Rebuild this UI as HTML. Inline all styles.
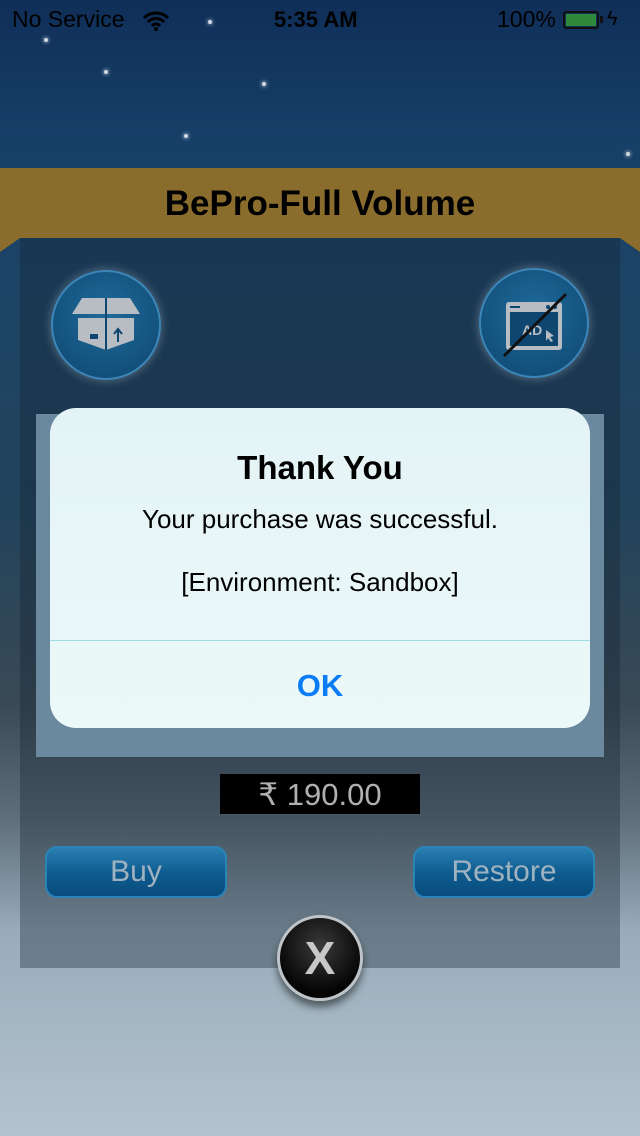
<!DOCTYPE html>
<html><head><meta charset="utf-8"><style>
*{margin:0;padding:0;box-sizing:border-box}
body{width:640px;height:1136px;overflow:hidden;position:relative;font-family:"Liberation Sans",sans-serif;
background:linear-gradient(180deg,#0f2e58 0%,#163f68 12%,#1d4466 25%,#22435c 45%,#3a4a55 62%,#5e6e7a 72%,#98acba 82%,#b4c4ce 100%)}
.abs{position:absolute}
.star{position:absolute;width:4px;height:4px;border-radius:50%;background:#cfd8e0;box-shadow:0 0 4px #fff}
.sb{top:6px;font-size:23px;color:#000}
.banner{left:0;top:168px;width:640px;height:70px;background:#8a6c2c;text-align:center;font-weight:bold;font-size:35px;line-height:72px;color:#000}
.panel{left:20px;top:238px;width:600px;height:730px;background:rgba(20,35,50,.35)}
.circ{width:110px;height:110px;border-radius:50%;background:radial-gradient(circle at 50% 40%,#1f6a9a,#0e4670);border:2px solid #3d86b8;box-shadow:0 0 10px rgba(200,210,220,.4)}
.inner{left:36px;top:414px;width:568px;height:343px;background:#6a889e}
.alert{left:50px;top:408px;width:540px;height:320px;border-radius:26px;background:linear-gradient(#e4f3f5,#ecf9f9);text-align:center;color:#000}
.btn{height:52px;border-radius:12px;background:linear-gradient(#2a7fb3,#0d5a8e 55%,#0a4e7e);border:2px solid #2a84b8;color:#9fb2c0;font-size:30px;text-align:center;line-height:48px}
</style></head><body>
<div class="star" style="left:44px;top:38px"></div><div class="star" style="left:104px;top:70px"></div>
<div class="star" style="left:208px;top:20px"></div><div class="star" style="left:262px;top:82px"></div>
<div class="star" style="left:184px;top:134px"></div><div class="star" style="left:626px;top:152px"></div>
<div class="abs sb" style="left:12px">No Service</div>
<svg class="abs" style="left:143px;top:11px" width="26" height="20" viewBox="0 0 26 20"><path d="M1 7a17 17 0 0 1 24 0M5 11a11 11 0 0 1 16 0M9 15a5 5 0 0 1 8 0" stroke="#000" stroke-width="3" fill="none"/><circle cx="13" cy="18" r="2" fill="#000"/></svg>
<div class="abs sb" style="left:274px;font-weight:bold;font-size:22px;top:7px">5:35 AM</div>
<div class="abs sb" style="left:497px">100%</div>
<div class="abs" style="left:563px;top:11px;width:36px;height:18px;border:2px solid #111;border-radius:3px;padding:1px"><div style="width:100%;height:100%;background:#2e8a3a"></div></div>
<div class="abs" style="left:600px;top:16px;width:3px;height:7px;background:#111"></div>
<div class="abs" style="left:607px;top:8px;font-size:20px;color:#000">ϟ</div>
<div class="abs banner">BePro-Full Volume</div>
<div class="abs" style="left:0;top:238px;border-top:14px solid #8a6c2c;border-right:20px solid transparent"></div>
<div class="abs" style="left:620px;top:238px;border-top:14px solid #8a6c2c;border-left:20px solid transparent"></div>
<div class="abs panel"></div>
<div class="abs circ" style="left:51px;top:270px"></div>
<svg class="abs" style="left:66px;top:290px" width="80" height="70" viewBox="0 0 80 70"><path d="M6 24 16 8h48l10 16H6z M12 28h56v22l-28 10-28-10z" fill="#b7bdc2"/><path d="M40 8v52" stroke="#0e4670" stroke-width="2"/><rect x="24" y="44" width="8" height="5" fill="#0e4670"/><path d="M52 52V40M48 44l4-5 4 5" stroke="#0e4670" stroke-width="2" fill="none"/></svg>
<div class="abs circ" style="left:479px;top:268px"></div>
<svg class="abs" style="left:500px;top:290px" width="70" height="70" viewBox="0 0 70 70"><rect x="6" y="12" width="56" height="48" rx="3" fill="#b7bdc2"/><rect x="10" y="22" width="48" height="34" fill="#0e4670"/><path d="M10 17h10" stroke="#0e4670" stroke-width="2"/><circle cx="48" cy="17" r="2" fill="#0e4670"/><circle cx="55" cy="17" r="2" fill="#0e4670"/><text x="22" y="45" font-size="14" font-weight="bold" fill="#b7bdc2" font-family="Liberation Sans">AD</text><path d="M46 40l8 6-4 1 3 4-2 1-3-4-2 3z" fill="#b7bdc2"/><path d="M4 66 66 4" stroke="#111" stroke-width="3"/></svg>
<div class="abs inner"></div>
<div class="abs alert">
<div style="position:absolute;top:41px;width:100%;font-size:33px;font-weight:bold">Thank You</div>
<div style="position:absolute;top:96px;width:100%;font-size:26px">Your purchase was successful.</div>
<div style="position:absolute;top:159px;width:100%;font-size:26px">[Environment: Sandbox]</div>
<div style="position:absolute;top:232px;width:100%;height:1px;background:#9edbe2"></div>
<div style="position:absolute;top:260px;width:100%;font-size:31px;font-weight:bold;color:#0a7cf5">OK</div>
</div>
<div class="abs" style="left:220px;top:774px;width:200px;height:40px;background:#000;color:#b0b0b0;font-size:31px;text-align:center;line-height:42px">₹ 190.00</div>
<div class="abs btn" style="left:45px;top:846px;width:182px">Buy</div>
<div class="abs btn" style="left:413px;top:846px;width:182px">Restore</div>
<div class="abs" style="left:277px;top:915px;width:86px;height:86px;border-radius:50%;background:radial-gradient(circle at 50% 35%,#3a3a3a,#050505 70%);border:3px solid #bfc4c8;box-shadow:0 6px 8px rgba(0,0,0,.5);color:#c8c8c8;font-size:46px;font-weight:bold;text-align:center;line-height:80px">X</div>
</body></html>
